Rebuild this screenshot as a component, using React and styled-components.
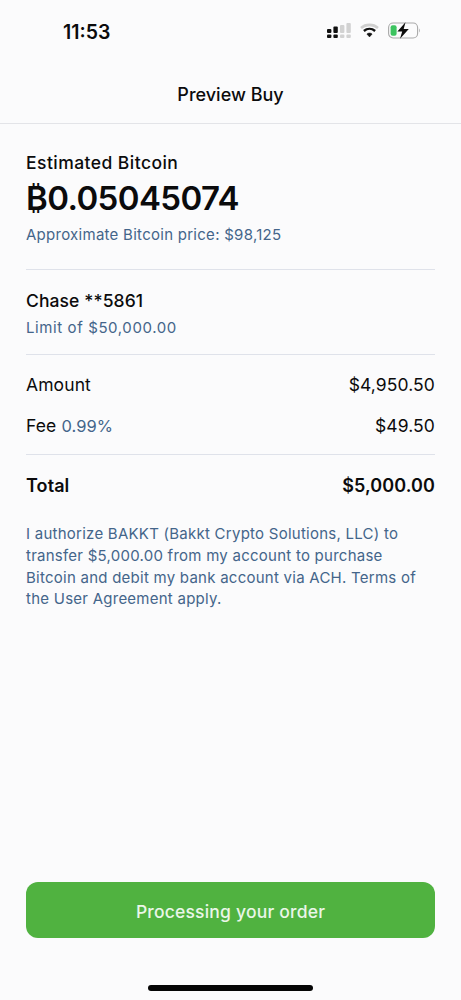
import React from 'react';
import styled, { createGlobalStyle } from 'styled-components';

const GlobalStyle = createGlobalStyle`
  html, body {
    margin: 0;
    padding: 0;
    background: #fbfbfc;
  }
  * { box-sizing: border-box; }
`;

const Screen = styled.div`
  width: 461px;
  height: 1000px;
  display: flex;
  flex-direction: column;
  background: #fbfbfc;
  color: #0b0b0c;
  font-family: Inter, "Liberation Sans", sans-serif;
`;

const StatusBar = styled.div`
  height: 62px;
  padding: 21px 40px 0 63px;
  display: flex;
  justify-content: space-between;
  align-items: flex-start;
`;

const Clock = styled.span`
  font-size: 19.5px;
  line-height: 22px;
  font-weight: 600;
`;

const StatusIcons = styled.div`
  display: flex;
  align-items: center;
  gap: 9px;
  margin-top: 1px;
`;

const Header = styled.div`
  height: 62px;
  padding-top: 4px;
  display: flex;
  align-items: center;
  justify-content: center;
  border-bottom: 1px solid #e3e4e8;
  font-size: 18px;
  font-weight: 500;
`;

const Content = styled.div`
  flex: 1;
  padding: 28px 26px 0;
  display: flex;
  flex-direction: column;
`;

const Section = styled.div`
  padding: ${({ $pad }) => $pad || '0'};
  border-bottom: ${({ $plain }) => ($plain ? 'none' : '1px solid #dfe2ea')};
`;

const Label = styled.div`
  font-size: 17.5px;
  line-height: 22px;
  font-weight: 500;
  letter-spacing: ${({ $spaced }) => ($spaced ? '0.45px' : '0.1px')};
`;

const BigValue = styled.div`
  font-size: 33px;
  line-height: 40px;
  font-weight: 600;
  letter-spacing: -0.6px;
  margin-top: 4px;
`;

const SubText = styled.div`
  font-size: 15px;
  line-height: 22px;
  letter-spacing: ${({ $wide }) => ($wide ? '0.6px' : '0.27px')};
  color: #44658a;
  margin-top: ${({ $top }) => $top || '4px'};
`;

const Row = styled.div`
  display: flex;
  justify-content: space-between;
  align-items: center;
  font-size: ${({ $bold }) => ($bold ? '18px' : '17.5px')};
  line-height: 22px;
  font-weight: ${({ $bold }) => ($bold ? 600 : 400)};
  letter-spacing: 0.1px;
  margin-top: ${({ $top }) => $top || '0'};
`;

const Accent = styled.span`
  font-size: 16.5px;
  color: #44658a;
`;

const Legal = styled.p`
  margin: 0;
  font-size: 15px;
  line-height: 21.8px;
  letter-spacing: 0.25px;
  color: #44658a;
`;

const Footer = styled.div`
  padding: 0 26px;
  display: flex;
  flex-direction: column;
`;

const ActionButton = styled.button`
  height: 56px;
  padding: 3px 0 0;
  border: none;
  border-radius: 12px;
  background: #50b240;
  color: #eaf6e8;
  font-family: inherit;
  font-size: 17.5px;
  font-weight: 500;
  letter-spacing: 0.2px;
`;

const HomeBar = styled.div`
  width: 165px;
  height: 6px;
  margin: 47px auto 9px;
  border-radius: 3px;
  background: #050505;
`;

const SignalIcon = () => (
  <svg width="24" height="15" viewBox="0 0 24 15">
    <rect x="0" y="6" width="4.4" height="4" rx="1" fill="#111" />
    <rect x="0" y="11.6" width="4.4" height="3.4" rx="1" fill="#111" />
    <rect x="6.4" y="3.4" width="4.4" height="6.6" rx="1" fill="#111" />
    <rect x="6.4" y="11.6" width="4.4" height="3.4" rx="1" fill="#111" />
    <rect x="13" y="2" width="4.4" height="8" rx="1" fill="#d2d2d2" />
    <rect x="13" y="11.6" width="4.4" height="3.4" rx="1" fill="#d2d2d2" />
    <rect x="19.4" y="0" width="4.4" height="10" rx="1" fill="#d2d2d2" />
    <rect x="19.4" y="11.6" width="4.4" height="3.4" rx="1" fill="#d2d2d2" />
  </svg>
);

const WifiIcon = () => (
  <svg width="19" height="15" viewBox="0 0 19 15" fill="none">
    <path d="M1 5C5.8 0.8 13.2 0.8 18 5" stroke="#cfcfcf" strokeWidth="2.6" />
    <path d="M3.9 8C7.2 5.2 11.8 5.2 15.1 8" stroke="#111" strokeWidth="2.4" />
    <path d="M6.9 11C8.5 9.8 10.5 9.8 12.1 11L9.5 13.9Z" fill="#111" stroke="#111" strokeWidth="0.6" />
  </svg>
);

const BatteryIcon = () => (
  <svg width="33" height="17" viewBox="0 0 33 17" fill="none">
    <rect x="0.6" y="1" width="29" height="15" rx="4.5" stroke="#a9a9a9" strokeWidth="1.1" />
    <rect x="2.6" y="3.3" width="6" height="10.4" rx="2" fill="#3cc35f" />
    <path d="M31 6.5C32 7 32 10 31 10.5Z" fill="#a9a9a9" />
    <path d="M17.5 0.2L9.4 9.6H14.2L12 16.8L20.8 7H15.7Z" fill="#0c0c0c" />
  </svg>
);

export default function App() {
  return (
    <Screen>
      <GlobalStyle />
      <StatusBar>
        <Clock>11:53</Clock>
        <StatusIcons>
          <SignalIcon />
          <WifiIcon />
          <BatteryIcon />
        </StatusIcons>
      </StatusBar>
      <Header>Preview Buy</Header>
      <Content>
        <Section $pad="0 0 23px">
          <Label $spaced>Estimated Bitcoin</Label>
          <BigValue>₿0.05045074</BigValue>
          <SubText $top="6px">Approximate Bitcoin price: $98,125</SubText>
        </Section>
        <Section $pad="20px 0 15px">
          <Label>Chase **5861</Label>
          <SubText $top="5px" $wide>Limit of $50,000.00</SubText>
        </Section>
        <Section $pad="19px 0 17px">
          <Row>
            <span>Amount</span>
            <span>$4,950.50</span>
          </Row>
          <Row $top="19px">
            <span>Fee <Accent>0.99%</Accent></span>
            <span>$49.50</span>
          </Row>
        </Section>
        <Section $plain $pad="20px 0 26px">
          <Row $bold>
            <span>Total</span>
            <span>$5,000.00</span>
          </Row>
        </Section>
        <Legal>
          I authorize BAKKT (Bakkt Crypto Solutions, LLC) to transfer $5,000.00 from my account to purchase Bitcoin and debit my bank account via ACH. Terms of the User Agreement apply.
        </Legal>
      </Content>
      <Footer>
        <ActionButton>Processing your order</ActionButton>
        <HomeBar />
      </Footer>
    </Screen>
  );
}
